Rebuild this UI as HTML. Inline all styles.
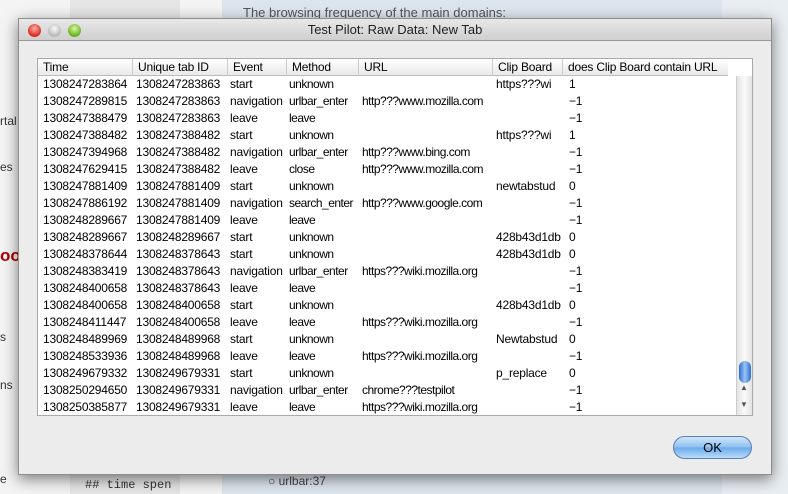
<!DOCTYPE html>
<html><head><meta charset="utf-8"><style>
*{margin:0;padding:0;box-sizing:border-box}
body{width:788px;height:494px;overflow:hidden;position:relative;background:#e9eef3;font-family:"Liberation Sans",sans-serif}
.bgl{position:absolute;left:0;top:0;width:222px;height:494px;background:#f4f4f4}
.bgl2{position:absolute;left:70px;top:0;width:110px;height:494px;background:#e6e6e6}
.bgr{position:absolute;left:222px;top:0;width:500px;height:494px;background:#dde6ef}
.bgtxt{position:absolute;left:243px;top:5px;font-size:13px;color:#555}
.win{position:absolute;left:18px;top:18px;width:754px;height:457px;background:#ececec;border:1px solid #8e8e8e;box-shadow:0 4px 14px rgba(0,0,0,.5)}
.title{height:22px;background:linear-gradient(#e8e8e8,#cfcfcf);border-bottom:1px solid #999;text-align:center;font-size:13px;line-height:22px;color:#222}
.dot{position:absolute;top:5px;width:13px;height:13px;border-radius:50%}
.tbl{position:absolute;left:18px;top:39px;width:716px;height:358px;background:#fff;border:1px solid #aaa;overflow:hidden}
.row{position:absolute;left:0;height:17px;font-size:12px;line-height:17px;color:#000;white-space:nowrap;letter-spacing:-0.2px}
.row span{position:absolute;top:0}
.hdr{top:0;height:17px;width:690px;background:linear-gradient(#fff,#e9e9e9);border-bottom:1px solid #bbb}
.hdr span{border-left:1px solid #ccc;padding-left:5px;height:17px}
.sb{position:absolute;left:698px;top:17px;width:16px;height:340px;background:linear-gradient(90deg,#e4e4e4,#fafafa,#e4e4e4);border-left:1px solid #ccc}
.thumb{position:absolute;left:2px;top:285px;width:12px;height:22px;border-radius:6px;background:linear-gradient(90deg,#2b6fd0,#9ac4f2,#2b6fd0)}
.ok{position:absolute;left:654px;top:417px;width:79px;height:23px;border-radius:12px;border:1px solid #5a7fb0;background:linear-gradient(#cfe6fb,#8dbff0 50%,#6aaaea 51%,#b8dcfa);text-align:center;font-size:13px;line-height:21px}
</style></head><body>
<div class="bgl"></div><div class="bgl2"></div><div class="bgr"></div>
<div class="bgtxt">The browsing frequency of the main domains:</div>
<div style="position:absolute;left:0;top:114px;font-size:12px;color:#333">rtal</div>
<div style="position:absolute;left:0;top:160px;font-size:12px;color:#333">es</div>
<div style="position:absolute;left:0;top:246px;font-size:17px;font-weight:bold;color:#a00">oo</div>
<div style="position:absolute;left:0;top:330px;font-size:12px;color:#333">s</div>
<div style="position:absolute;left:0;top:378px;font-size:12px;color:#333">ns</div>
<div style="position:absolute;left:0;top:472px;font-size:12px;color:#333">e</div>
<div style="position:absolute;left:85px;top:478px;font-family:'Liberation Mono',monospace;font-size:12px;color:#333">## time spen</div>
<div style="position:absolute;left:268px;top:474px;font-size:12px;color:#444">○ urlbar:37</div>
<div class="win">
<div class="title">Test Pilot: Raw Data: New Tab</div>
<div class="dot" style="left:9px;background:radial-gradient(circle at 50% 35%,#ffb0a8,#d8281c 70%)"></div>
<div class="dot" style="left:29px;background:radial-gradient(circle at 50% 35%,#fafafa,#b8b8b8 70%)"></div>
<div class="dot" style="left:49px;background:radial-gradient(circle at 50% 35%,#d8f7a0,#64b21c 70%)"></div>
<div class="tbl">
<div class="row hdr"><span style="left:0;border:0">Time</span><span style="left:94px">Unique tab ID</span><span style="left:189px">Event</span><span style="left:248px">Method</span><span style="left:320px">URL</span><span style="left:454px">Clip Board</span><span style="left:524px">does Clip Board contain URL</span></div>
<div id="rows"></div>
<div class="sb"><div class="thumb"></div><div style="position:absolute;left:3px;top:307px;font-size:8px;color:#555">▲</div><div style="position:absolute;left:3px;top:324px;font-size:8px;color:#555">▼</div></div>
</div>
<div class="ok">OK</div>
</div>
<script>
var d=[["1308247283864","1308247283863","start","unknown","","https???wi","1"],
["1308247289815","1308247283863","navigation","urlbar_enter","http???www.mozilla.com","","−1"],
["1308247388479","1308247283863","leave","leave","","","−1"],
["1308247388482","1308247388482","start","unknown","","https???wi","1"],
["1308247394968","1308247388482","navigation","urlbar_enter","http???www.bing.com","","−1"],
["1308247629415","1308247388482","leave","close","http???www.mozilla.com","","−1"],
["1308247881409","1308247881409","start","unknown","","newtabstud","0"],
["1308247886192","1308247881409","navigation","search_enter","http???www.google.com","","−1"],
["1308248289667","1308247881409","leave","leave","","","−1"],
["1308248289667","1308248289667","start","unknown","","428b43d1db","0"],
["1308248378644","1308248378643","start","unknown","","428b43d1db","0"],
["1308248383419","1308248378643","navigation","urlbar_enter","https???wiki.mozilla.org","","−1"],
["1308248400658","1308248378643","leave","leave","","","−1"],
["1308248400658","1308248400658","start","unknown","","428b43d1db","0"],
["1308248411447","1308248400658","leave","leave","https???wiki.mozilla.org","","−1"],
["1308248489969","1308248489968","start","unknown","","Newtabstud","0"],
["1308248533936","1308248489968","leave","leave","https???wiki.mozilla.org","","−1"],
["1308249679332","1308249679331","start","unknown","","p_replace","0"],
["1308250294650","1308249679331","navigation","urlbar_enter","chrome???testpilot","","−1"],
["1308250385877","1308249679331","leave","leave","https???wiki.mozilla.org","","−1"]];
var x=[5,98,192,251,324,458,531],h="";
d.forEach(function(r,i){h+='<div class="row" style="top:'+(17+i*17)+'px">';r.forEach(function(c,j){h+='<span style="left:'+x[j]+'px'+(j==3||j==4?';letter-spacing:-0.5px':'')+'">'+c+'</span>'});h+='</div>'});
document.getElementById('rows').innerHTML=h;
</script>
</body></html>
